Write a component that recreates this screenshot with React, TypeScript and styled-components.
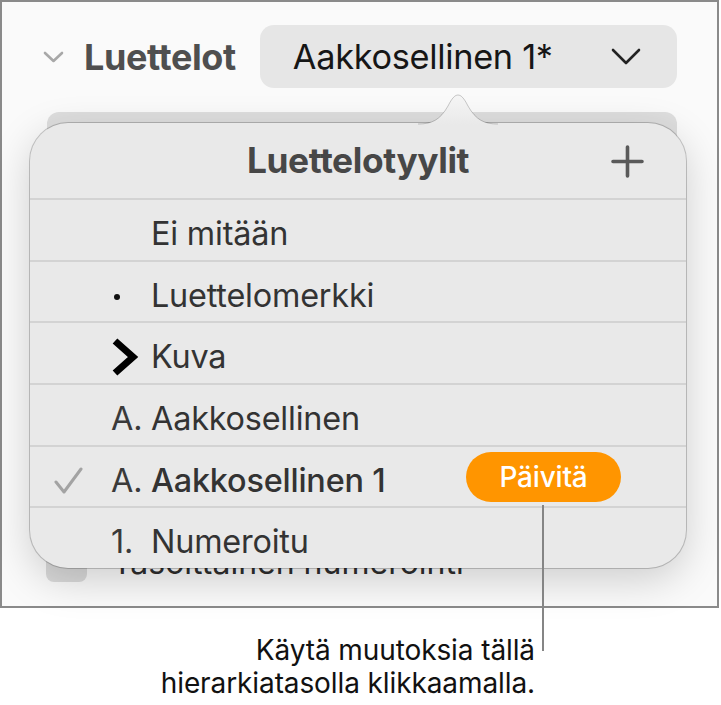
import React from "react";
import styled, { createGlobalStyle } from "styled-components";

const GlobalStyle = createGlobalStyle`
  html, body {
    margin: 0;
    padding: 0;
    background: #fff;
  }
  body {
    font-family: Inter, "Noto Sans", "Liberation Sans", sans-serif;
    -webkit-font-smoothing: antialiased;
  }
`;

//styles start
const Page = styled.div`
  position: relative;
  width: 721px;
  height: 705px;
  overflow: hidden;
`;

const Frame = styled.div`
  box-sizing: border-box;
  width: 719px;
  height: 608px;
  border: 2px solid #8a8a8a;
  background: #fafafa;
  padding: 23px 40px 24px 41px;
  display: flex;
  flex-direction: column;
`;

const SectionRow = styled.div`
  display: flex;
  align-items: center;
  height: 63px;
`;

const Disclosure = styled.svg`
  width: 21px;
  height: 12px;
  margin-right: 20px;
`;

const SectionTitle = styled.div`
  font-size: 36px;
  font-weight: 700;
  color: #4f4f4f;
  letter-spacing: -0.4px;
  white-space: nowrap;
  margin-right: 24px;
`;

const PopupButton = styled.div`
  flex: 1;
  height: 63px;
  border-radius: 14px;
  background: #e6e6e6;
  display: flex;
  align-items: center;
  justify-content: space-between;
  padding: 0 36px 0 33px;
  box-sizing: border-box;
  font-size: 34.3px;
  letter-spacing: -0.3px;
  color: #161616;
`;

const Field = styled.div`
  flex: 1;
  margin: 24px 0 0 4px;
  border-radius: 12px;
  background: #dedede;
`;

const CheckRow = styled.div`
  display: flex;
  align-items: center;
  gap: 25px;
  margin-top: 14px;
  height: 40px;
`;

const CheckBox = styled.div`
  width: 41px;
  height: 40px;
  margin-left: 3px;
  border-radius: 8px;
  background: #dadada;
`;

const CheckLabel = styled.div`
  font-size: 32px;
  color: #2e2e2e;
`;

const Popover = styled.div`
  position: absolute;
  left: 30px;
  top: 123px;
  width: 656px;
  height: 445px;
  box-sizing: border-box;
  border-radius: 38px;
  background: #e9e9e9;
  box-shadow: 0 0 0 1px rgba(0, 0, 0, 0.2), 0 12px 40px rgba(0, 0, 0, 0.18);
  display: flex;
  flex-direction: column;
`;

const Arrow = styled.svg`
  position: absolute;
  left: 388px;
  top: -29px;
  width: 80px;
  height: 31px;
`;

const PopoverHeader = styled.div`
  position: relative;
  height: 75px;
  display: flex;
  align-items: center;
  justify-content: center;
  font-size: 35.3px;
  font-weight: 700;
  color: #474747;
  letter-spacing: -0.4px;
`;

const AddButton = styled.svg`
  position: absolute;
  right: 42px;
  top: 22px;
  width: 33px;
  height: 33px;
`;

const StyleRow = styled.div`
  flex: 1;
  display: flex;
  align-items: center;
  border-top: 2px solid #d3d3d3;
  padding: 7px 0 0 24px;
  font-size: 32.4px;
  letter-spacing: -0.2px;
  color: #333;
`;

const CheckCell = styled.div`
  width: 57px;
  display: flex;
  align-items: center;
`;

const MarkerCell = styled.div`
  width: 40px;
  display: flex;
  align-items: center;
  color: #3a3a3a;
`;

const Bullet = styled.span`
  width: 6px;
  height: 6px;
  margin: 4px 0 0 3px;
  border-radius: 50%;
  background: #111;
`;

const RowLabel = styled.div<{ $strong?: boolean }>`
  flex: 1;
  font-weight: ${({ $strong }) => ($strong ? 500 : 400)};
`;

const UpdateButton = styled.div`
  width: 155px;
  height: 50px;
  margin: -7px 65px 0 0;
  border-radius: 25px;
  background: #ff9500;
  color: #fff;
  font-size: 28px;
  font-weight: 500;
  letter-spacing: -0.2px;
  display: flex;
  align-items: center;
  justify-content: center;
`;

const CalloutLine = styled.div`
  position: absolute;
  left: 542px;
  top: 505px;
  width: 2px;
  height: 146px;
  background: #858585;
`;

const Callout = styled.div`
  margin-top: 26px;
  padding-right: 186px;
  text-align: right;
  font-size: 28px;
  line-height: 33px;
  letter-spacing: -0.1px;
  color: #111;
`;
//styles end

type ListStyle = {
  name: string;
  marker?: string;
  checked?: boolean;
  strong?: boolean;
  modified?: boolean;
};

const listStyles: ListStyle[] = [
  { name: "Ei mitään" },
  { name: "Luettelomerkki", marker: "bullet" },
  { name: "Kuva", marker: "image" },
  { name: "Aakkosellinen", marker: "A." },
  { name: "Aakkosellinen 1", marker: "A.", checked: true, strong: true, modified: true },
  { name: "Numeroitu", marker: "1." },
];

const Marker: React.FC<{ marker?: string }> = ({ marker }) => {
  if (!marker) return null;
  if (marker === "bullet") return <Bullet />;
  if (marker === "image") {
    return (
      <svg width="28" height="40" viewBox="0 0 28 40">
        <path d="M4 4 L22 20 L4 36" fill="none" stroke="#000" strokeWidth="7" strokeLinejoin="miter" />
      </svg>
    );
  }
  return <span>{marker}</span>;
};

const App: React.FC = () => {
  return (
    <Page>
      <GlobalStyle />
      <Frame>
        <SectionRow>
          <Disclosure viewBox="0 0 21 12">
            <path d="M2 2 L10.5 10 L19 2" fill="none" stroke="#a8a8a8" strokeWidth="2.6" strokeLinecap="round" strokeLinejoin="round" />
          </Disclosure>
          <SectionTitle>Luettelot</SectionTitle>
          <PopupButton>
            <span>Aakkosellinen 1*</span>
            <svg width="30" height="17" viewBox="0 0 30 17">
              <path d="M2 2 L15 15 L28 2" fill="none" stroke="#222" strokeWidth="2.6" strokeLinecap="round" strokeLinejoin="round" />
            </svg>
          </PopupButton>
        </SectionRow>
        <Field />
        <CheckRow>
          <CheckBox />
          <CheckLabel>Tasoittainen numerointi</CheckLabel>
        </CheckRow>
      </Frame>

      <Popover>
        <Arrow viewBox="0 0 80 31">
          <defs>
            <linearGradient id="arrowFill" x1="0" y1="0" x2="0" y2="1">
              <stop offset="0" stopColor="#f5f5f5" />
              <stop offset="1" stopColor="#e9e9e9" />
            </linearGradient>
          </defs>
          <path d="M0 31 L0 30 C14 30 22 26 30 12 C34 4 37 1 40 1 C43 1 46 4 50 12 C58 26 66 30 80 30 L80 31 Z" fill="url(#arrowFill)" />
          <path d="M0 30 C14 30 22 26 30 12 C34 4 37 1 40 1 C43 1 46 4 50 12 C58 26 66 30 80 30" fill="none" stroke="rgba(0,0,0,0.2)" strokeWidth="1" />
        </Arrow>
        <PopoverHeader>
          Luettelotyylit
          <AddButton viewBox="0 0 33 33">
            <path d="M16.5 2 V31 M2 16.5 H31" stroke="#5a5a5a" strokeWidth="3.6" strokeLinecap="round" />
          </AddButton>
        </PopoverHeader>
        {listStyles.map((item) => (
          <StyleRow key={item.name}>
            <CheckCell>
              {item.checked && (
                <svg width="29" height="27" viewBox="0 0 29 27">
                  <path d="M2 15 L10 25 L27 2" fill="none" stroke="#a3a3a3" strokeWidth="3" strokeLinecap="round" strokeLinejoin="round" />
                </svg>
              )}
            </CheckCell>
            <MarkerCell>
              <Marker marker={item.marker} />
            </MarkerCell>
            <RowLabel $strong={item.strong}>{item.name}</RowLabel>
            {item.modified && <UpdateButton>Päivitä</UpdateButton>}
          </StyleRow>
        ))}
      </Popover>

      <CalloutLine />
      <Callout>
        Käytä muutoksia tällä
        <br />
        hierarkiatasolla klikkaamalla.
      </Callout>
    </Page>
  );
};

export default App;
